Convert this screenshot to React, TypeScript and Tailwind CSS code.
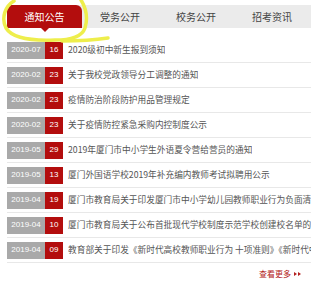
const tabs = ['通知公告', '党务公开', '校务公开', '招考资讯'];

const news = [
  { month: '2020-07', day: '16', title: '2020级初中新生报到须知' },
  { month: '2020-02', day: '23', title: '关于我校党政领导分工调整的通知' },
  { month: '2020-02', day: '23', title: '疫情防治阶段防护用品管理规定' },
  { month: '2020-02', day: '23', title: '关于疫情防控紧急采购内控制度公示' },
  { month: '2019-05', day: '29', title: '2019年厦门市中小学生外语夏令营给营员的通知' },
  { month: '2019-05', day: '13', title: '厦门外国语学校2019年补充编内教师考试拟聘用公示' },
  { month: '2019-04', day: '19', title: '厦门市教育局关于印发厦门市中小学幼儿园教师职业行为负面清单的通知' },
  { month: '2019-04', day: '10', title: '厦门市教育局关于公布首批现代学校制度示范学校创建校名单的通知' },
  { month: '2019-04', day: '09', title: '教育部关于印发《新时代高校教师职业行为 十项准则》《新时代中小学教师职业行为十项准则》' },
];

export default function App() {
  return (
    <div className="relative w-[320px] h-[284px] overflow-hidden bg-white font-['Noto_Sans_CJK_SC','Noto_Sans',sans-serif]">
      <div className="w-[311px] pl-[7px] pt-[5px]">
        <div className="flex h-[23px] bg-[#ebebeb]">
          {tabs.map((tab, i) =>
            i === 0 ? (
              <div
                key={tab}
                className="relative flex w-[75px] items-center justify-center rounded-tr-[6px] bg-[#b30d0d] text-[10px] text-white"
              >
                {tab}
                <span className="absolute left-1/2 top-full h-0 w-0 -translate-x-1/2 border-x-[4px] border-t-[4px] border-x-transparent border-t-[#b30d0d]" />
              </div>
            ) : (
              <div key={tab} className="flex w-[76px] items-center justify-center text-[10px] text-[#444]">
                {tab}
              </div>
            )
          )}
        </div>

        <ul className="mt-[10px]">
          {news.map((item, i) => (
            <li key={i} className="flex h-[25px] items-center border-b border-[#e8e8e8]">
              <span className="flex h-[17px] w-[38px] shrink-0 items-center justify-center bg-[#a9a9a9] font-['Liberation_Sans',sans-serif] text-[8px] text-white">
                {item.month}
              </span>
              <span className="flex h-[17px] w-[18px] shrink-0 items-center justify-center bg-[#b30d0d] font-['Liberation_Sans',sans-serif] text-[8px] text-white">
                {item.day}
              </span>
              <span className="ml-[5px] overflow-hidden whitespace-nowrap text-[8.7px] text-[#555]">{item.title}</span>
            </li>
          ))}
        </ul>

        <div className="mt-[5px] flex items-center justify-end pr-[9px] text-[8px] text-[#b32020]">
          查看更多
          <svg width="9" height="6" viewBox="0 0 9 6" className="ml-[2px]">
            <path d="M1 1 L4 3 L1 5 Z M5 1 L8 3 L5 5 Z" fill="#b32020" />
          </svg>
        </div>
      </div>

      <svg className="pointer-events-none absolute left-0 top-0" width="120" height="50" viewBox="0 0 120 50">
        <path
          d="M14 1 C5 6, 1 18, 6 28 C12 38, 30 41, 55 40 C70 40, 82 37, 85 28 C88 18, 86 8, 81 0"
          fill="none"
          stroke="#eeee4c"
          strokeWidth="3.5"
          strokeLinecap="round"
        />
        <path d="M62 41 C80 41, 95 40, 108 38" fill="none" stroke="#eeee4c" strokeWidth="3.5" strokeLinecap="round" />
      </svg>
    </div>
  );
}
